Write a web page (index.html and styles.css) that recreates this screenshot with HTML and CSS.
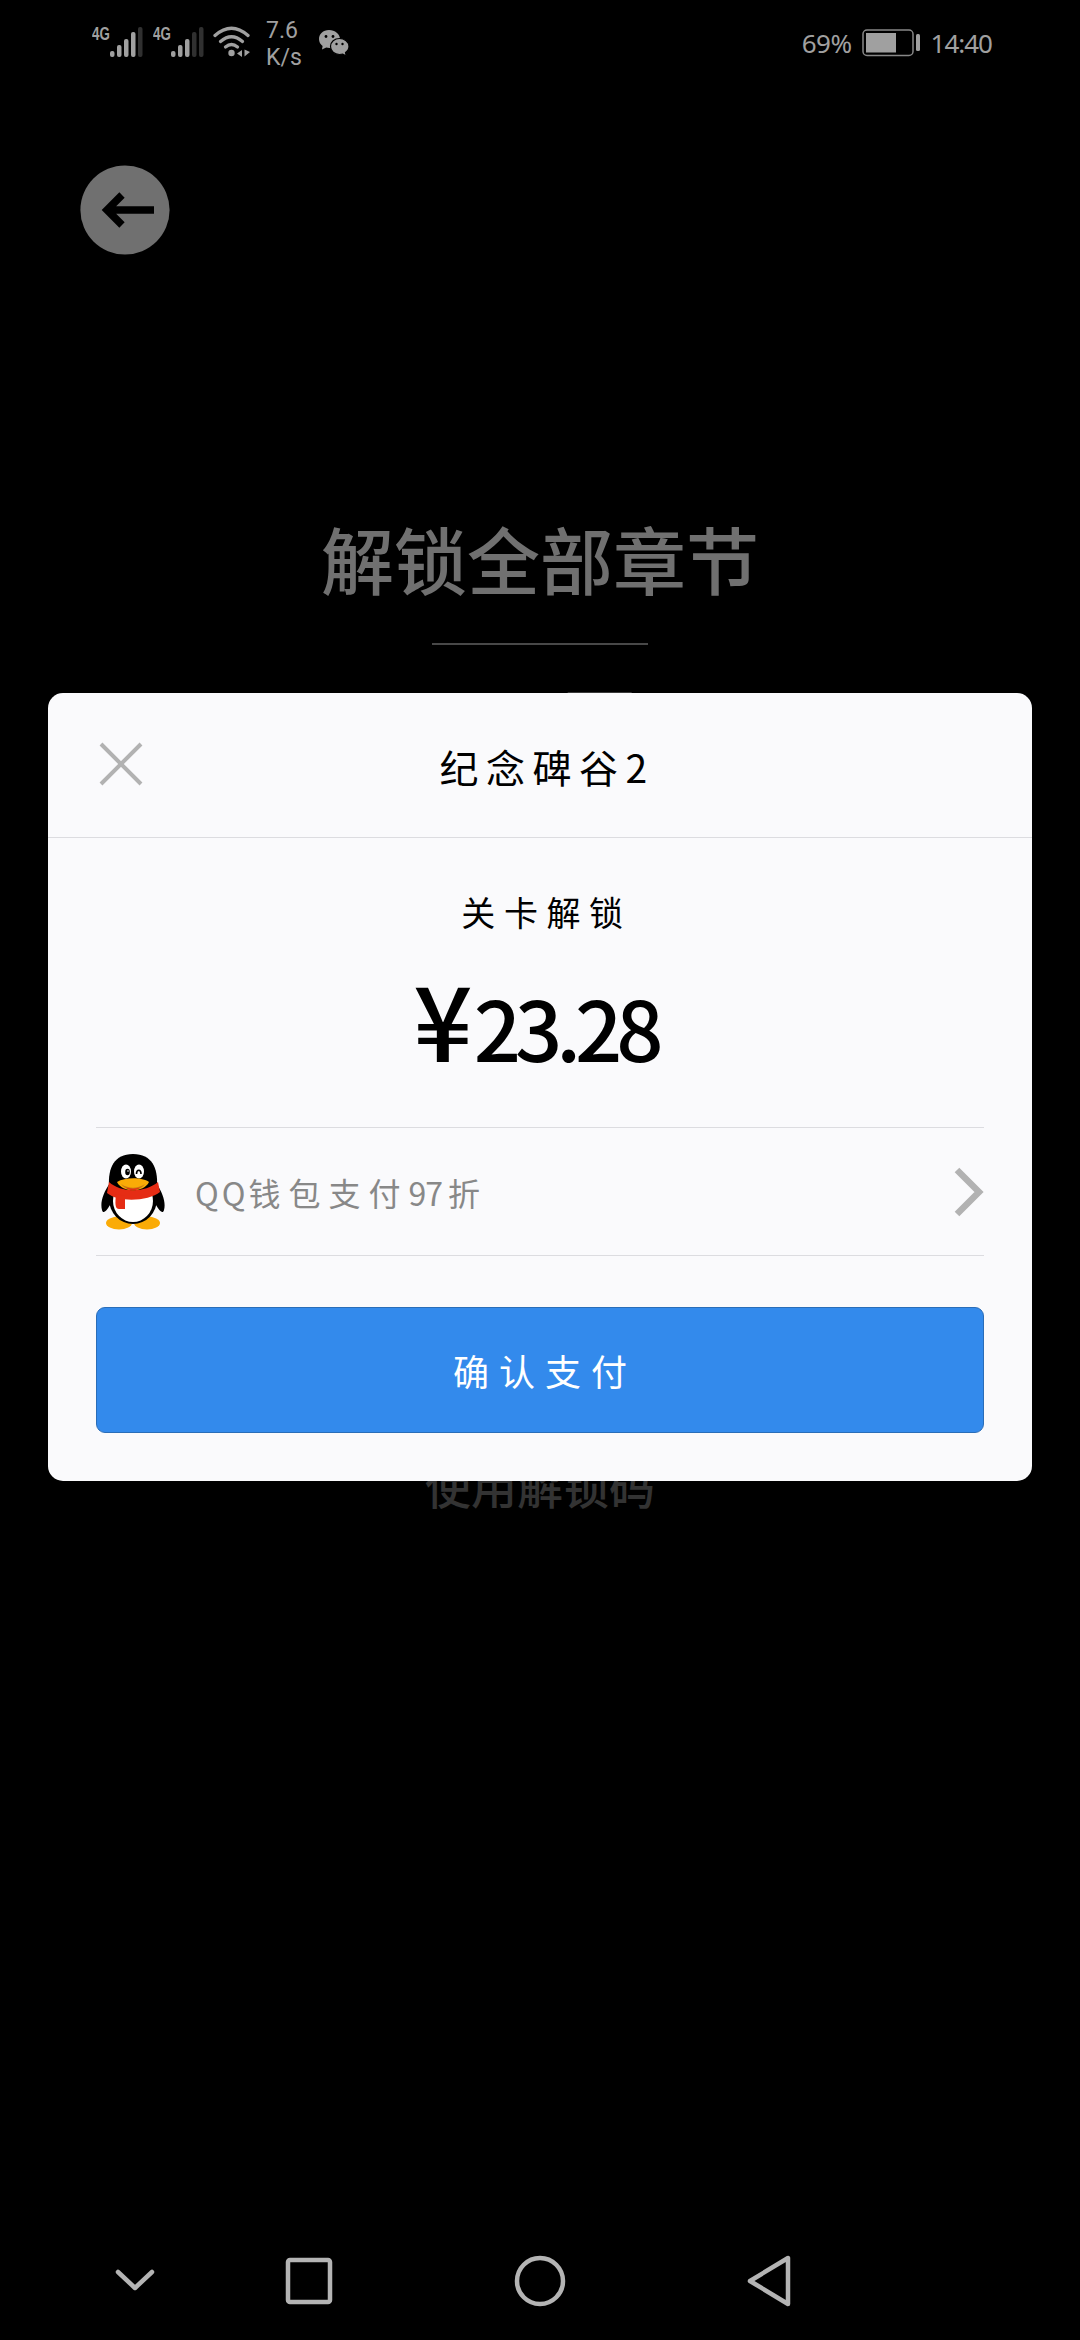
FILE: index.html
```
<!DOCTYPE html>
<html lang="zh-CN">
<head>
<meta charset="utf-8">
<title>纪念碑谷2</title>
<link rel="stylesheet" href="styles.css">
</head>
<body>
<div class="screen">
  <header class="status">
    <div class="signal">
      <span class="net">4G</span>
      <svg width="34" height="32" viewBox="0 0 34 32" fill="#a0a0a0"><rect x="1" y="25" width="4.500" height="6" rx="2"/><rect x="8" y="19" width="4.500" height="12" rx="2"/><rect x="15" y="13" width="4.500" height="18" rx="2"/><rect x="22" y="6" width="4.500" height="25" rx="2"/><rect x="29" y="1" width="4.500" height="30" rx="2" fill="#303030"/></svg>
    </div>
    <div class="signal">
      <span class="net">4G</span>
      <svg width="34" height="32" viewBox="0 0 34 32" fill="#a0a0a0"><rect x="1" y="25" width="4.500" height="6" rx="2"/><rect x="8" y="19" width="4.500" height="12" rx="2"/><rect x="15" y="13" width="4.500" height="18" rx="2"/><rect x="22" y="6" width="4.500" height="25" rx="2" fill="#303030"/><rect x="29" y="1" width="4.500" height="30" rx="2" fill="#303030"/></svg>
    </div>
    <svg class="wifi" width="38" height="32" viewBox="0 0 38 32" fill="none" stroke="#a0a0a0" stroke-width="3.300" stroke-linecap="round"><path d="M2 9.500Q18.500-5 35 9.500"/><path d="M7.500 15.500Q18.500 6 29.500 15.500"/><path d="M12.500 21Q18.500 16 24.500 21"/><circle cx="18.500" cy="27" r="3.200" fill="#a0a0a0" stroke="none"/><path d="M29 24v7l-5-3.500zM31.500 23.500v7l5.500-4.500z" fill="#a0a0a0" stroke="none"/></svg>
    <div class="speed"><span>7.6</span><span>K/s</span></div>
    <svg class="wechat" width="32" height="28" viewBox="0 0 32 28"><path d="M11 1C5 1 1 5 1 10c0 3 1.300 5.300 3.600 7L4 20.500l4.200-2.100 3.300.6C17 19 22 15 22 10S17 1 11 1z" fill="#a0a0a0"/><path d="M21.500 9.500C16.500 9.500 12.500 13 12.500 17.500s4 8 9 8l3.200-.5 3.600 2-.8-3.500c2.300-1.500 3.500-3.500 3.500-6 0-4.500-4.500-8-9.500-8z" fill="#a0a0a0" stroke="#000" stroke-width="1.200"/><g fill="#000"><circle cx="8" cy="7.500" r="1.400"/><circle cx="15" cy="7.500" r="1.400"/><circle cx="18.500" cy="15" r="1.200"/><circle cx="24.500" cy="15" r="1.200"/></g></svg>
    <div class="status-right">
      <span class="pct">69%</span>
      <svg width="58" height="28" viewBox="0 0 58 28"><rect x="1" y="1" width="50" height="25.500" rx="4" fill="none" stroke="#888" stroke-width="1.500"/><rect x="4" y="4" width="30" height="19.500" fill="#a0a0a0"/><rect x="54" y="5" width="4" height="17" rx="1.500" fill="#a0a0a0"/></svg>
      <span class="clock">14:40</span>
    </div>
  </header>

  <main class="store">
    <svg class="back" width="90" height="90" viewBox="0 0 90 90"><circle cx="45" cy="45" r="44.600" fill="#707070"/><path d="M74 45H28M42 30L27 45l15 15" fill="none" stroke="#000" stroke-width="7.500"/></svg>
    <h1>解锁全部章节</h1>
    <div class="rule"></div>
    <div class="list-price">24元</div>
    <div class="redeem">使用解锁码</div>
  </main>

  <nav class="nav">
    <svg width="40" height="52" viewBox="0 0 40 52"><path d="M3 17l17 16 17-16"/></svg>
    <svg width="48" height="52" viewBox="0 0 48 52"><rect x="3" y="5" width="42" height="42" rx="2"/></svg>
    <svg width="52" height="52" viewBox="0 0 52 52"><circle cx="26" cy="26" r="23"/></svg>
    <svg width="46" height="52" viewBox="0 0 46 52"><path d="M42 3v46L4 26z"/></svg>
  </nav>

  <section class="dialog">
    <div class="dialog-head">
      <svg class="close" width="44" height="44" viewBox="0 0 44 44"><path d="M2 2l40 40M42 2L2 42" stroke="#b2b2b2" stroke-width="4"/></svg>
      <h2>纪念碑谷2</h2>
    </div>
    <div class="dialog-body">
      <div class="item">关卡解锁</div>
      <div class="amount"><span class="yen">¥</span><span class="num">23.28</span></div>
      <div class="method">
        <svg class="qq" width="66" height="78" viewBox="0 0 66 78">
          <ellipse cx="18" cy="70" rx="13" ry="6.500" fill="#faab07"/><ellipse cx="46" cy="70" rx="13" ry="6.500" fill="#faab07"/>
          <path d="M9 30C2 40-1 50 1 57c1 4 4 2 8-5h46c4 7 7 9 8 5 2-7-1-17-8-27z"/>
          <ellipse cx="32" cy="46" rx="24" ry="25"/>
          <ellipse cx="32" cy="48" rx="20" ry="21" fill="#fff"/>
          <path d="M8 33C7 15 13 1 32 1s25 14 24 32c-8 9-40 9-48 0z"/>
          <path d="M8 29c12 11 36 11 49 0l2 10c-11 9-41 11-53 1z" fill="#e52c14"/>
          <path d="M15 41l9 2v13h-6c-4 0-4-5-3-15z" fill="#e52c14"/>
          <ellipse cx="25" cy="18.500" rx="5" ry="7" fill="#fff"/><ellipse cx="38" cy="18.500" rx="5" ry="7" fill="#fff"/>
          <ellipse cx="26.500" cy="19" rx="2.300" ry="3.200"/><circle cx="27" cy="18" r=".8" fill="#fff"/>
          <path d="M35.500 21c0-5 4.500-5 4.500 0" fill="none" stroke="#000" stroke-width="1.600"/>
          <path d="M16 29c8-5 25-5 32 0-5 11-27 11-32 0z" fill="#faab07"/><path d="M20 31c8 5 16 5 24 0-6 8-18 8-24 0z" fill="#c97a12"/><path d="M25 34.500c4 1.500 10 1.500 14 0-3 3.500-11 3.500-14 0z" fill="#e52c14"/>
        </svg>
        <span class="method-name"><b class="latin">QQ</b>钱包支付<b class="digits">97</b>折</span>
        <svg class="chevron" width="30" height="50" viewBox="0 0 30 50"><path d="M3 3l22 22L3 47" fill="none" stroke="#b2b2b2" stroke-width="6.500"/></svg>
      </div>
      <button class="pay">确认支付</button>
    </div>
  </section>
</div>
</body>
</html>
```
FILE: styles.css
```
* { box-sizing: border-box; }
body { margin: 0; background: #000; }
svg { display: block; flex: none; }
h1, h2 { margin: 0; font-weight: 400; }
.screen {
  position: relative;
  width: 1080px;
  height: 2340px;
  overflow: hidden;
  display: flex;
  flex-direction: column;
  background: #000;
  font-family: "Noto Sans CJK SC", sans-serif;
}

/* status bar */
.status {
  height: 84px;
  padding: 0 88px 0 92px;
  display: flex;
  align-items: flex-start;
  color: #a0a0a0;
}
.signal { display: flex; width: 61px; padding-top: 26px; }
.net {
  width: 17px;
  font: 700 18px/16px "Liberation Sans", sans-serif;
  transform: scaleX(.74);
  transform-origin: left;
}
.wifi { margin: 26px 0 0 -1px; }
.speed {
  display: flex;
  flex-direction: column;
  width: 40px;
  margin: 17px 0 0 15px;
  font: 400 23px/27px Roboto, sans-serif;
}
.wechat { margin: 29px 0 0 12px; }
.status-right {
  display: flex;
  align-items: center;
  height: 28px;
  margin: 29px 0 0 auto;
  font: 400 26px/30px "Noto Sans", sans-serif;
}
.pct { letter-spacing: -.5px; margin-right: 10px; }
.clock { margin-left: 11px; letter-spacing: -1px; }

/* dimmed page */
.store {
  flex: 1;
  display: flex;
  flex-direction: column;
  align-items: center;
  color: #707070;
}
.back { align-self: flex-start; margin: 81px 0 0 80px; }
h1 { margin-top: 252px; font-size: 73px; font-weight: 500; line-height: 100px; }
.rule { width: 216px; height: 2px; margin-top: 36px; background: #484848; }
.list-price {
  margin-top: 22px;
  padding-left: 14px;
  font-size: 90px;
  line-height: 110px;
  letter-spacing: 5px;
}
.redeem { margin-top: 677px; font-size: 46px; font-weight: 500; line-height: 60px; color: #333; }

/* navigation bar */
.nav {
  display: flex;
  align-items: center;
  height: 118px;
  padding-left: 115px;
}
.nav svg { fill: none; stroke: #b4b4b4; stroke-width: 4.500; stroke-linecap: round; stroke-linejoin: round; }
.nav svg + svg { margin-left: 130px; }
.nav svg:nth-child(3) { margin-left: 181px; }
.nav svg:nth-child(4) { margin-left: 180px; }

/* payment dialog */
.dialog {
  position: absolute;
  left: 48px;
  top: 693px;
  width: 984px;
  height: 788px;
  border-radius: 15px;
  background: #fafafc;
  color: #000;
}
.dialog-head {
  display: flex;
  align-items: center;
  height: 145px;
  padding: 0 51px;
  border-bottom: 1px solid #dcdce0;
}
.close { margin-top: -2px; }
h2 {
  flex: 1;
  padding: 2px 44px 0 14px;
  text-align: center;
  font-size: 39px;
  line-height: 60px;
  letter-spacing: 7.500px;
}
.dialog-body { padding: 0 48px; }
.item {
  padding: 49px 0 0 13px;
  text-align: center;
  font-size: 34px;
  line-height: 50px;
  letter-spacing: 8.600px;
}
.amount {
  display: flex;
  justify-content: center;
  align-items: baseline;
  height: 190px;
  padding: 10px 9px 0 0;
  line-height: 140px;
}
.yen { font-size: 104px; font-weight: 500; margin-right: 1px; }
.num { font-size: 83px; font-weight: 500; letter-spacing: -6px; }
.method {
  display: flex;
  align-items: center;
  height: 129px;
  border-top: 1px solid #dcdce0;
  border-bottom: 1px solid #dcdce0;
}
.qq { margin-left: 5px; }
.method-name {
  margin-left: 28px;
  color: #888;
  font-size: 32px;
  letter-spacing: 8px;
  white-space: nowrap;
}
.method-name b { font-weight: 400; }
.method-name .latin { letter-spacing: 3px; }
.method-name .digits { letter-spacing: -1px; margin-right: 6px; }
.chevron { margin-left: auto; }
.pay {
  display: block;
  width: 100%;
  height: 126px;
  margin-top: 51px;
  padding: 0 0 0 10px;
  border: 1px solid #2a6db8;
  border-radius: 9px;
  background: #338aec;
  color: #fff;
  font: 400 36px/60px "Noto Sans CJK SC", sans-serif;
  letter-spacing: 10px;
}
```
